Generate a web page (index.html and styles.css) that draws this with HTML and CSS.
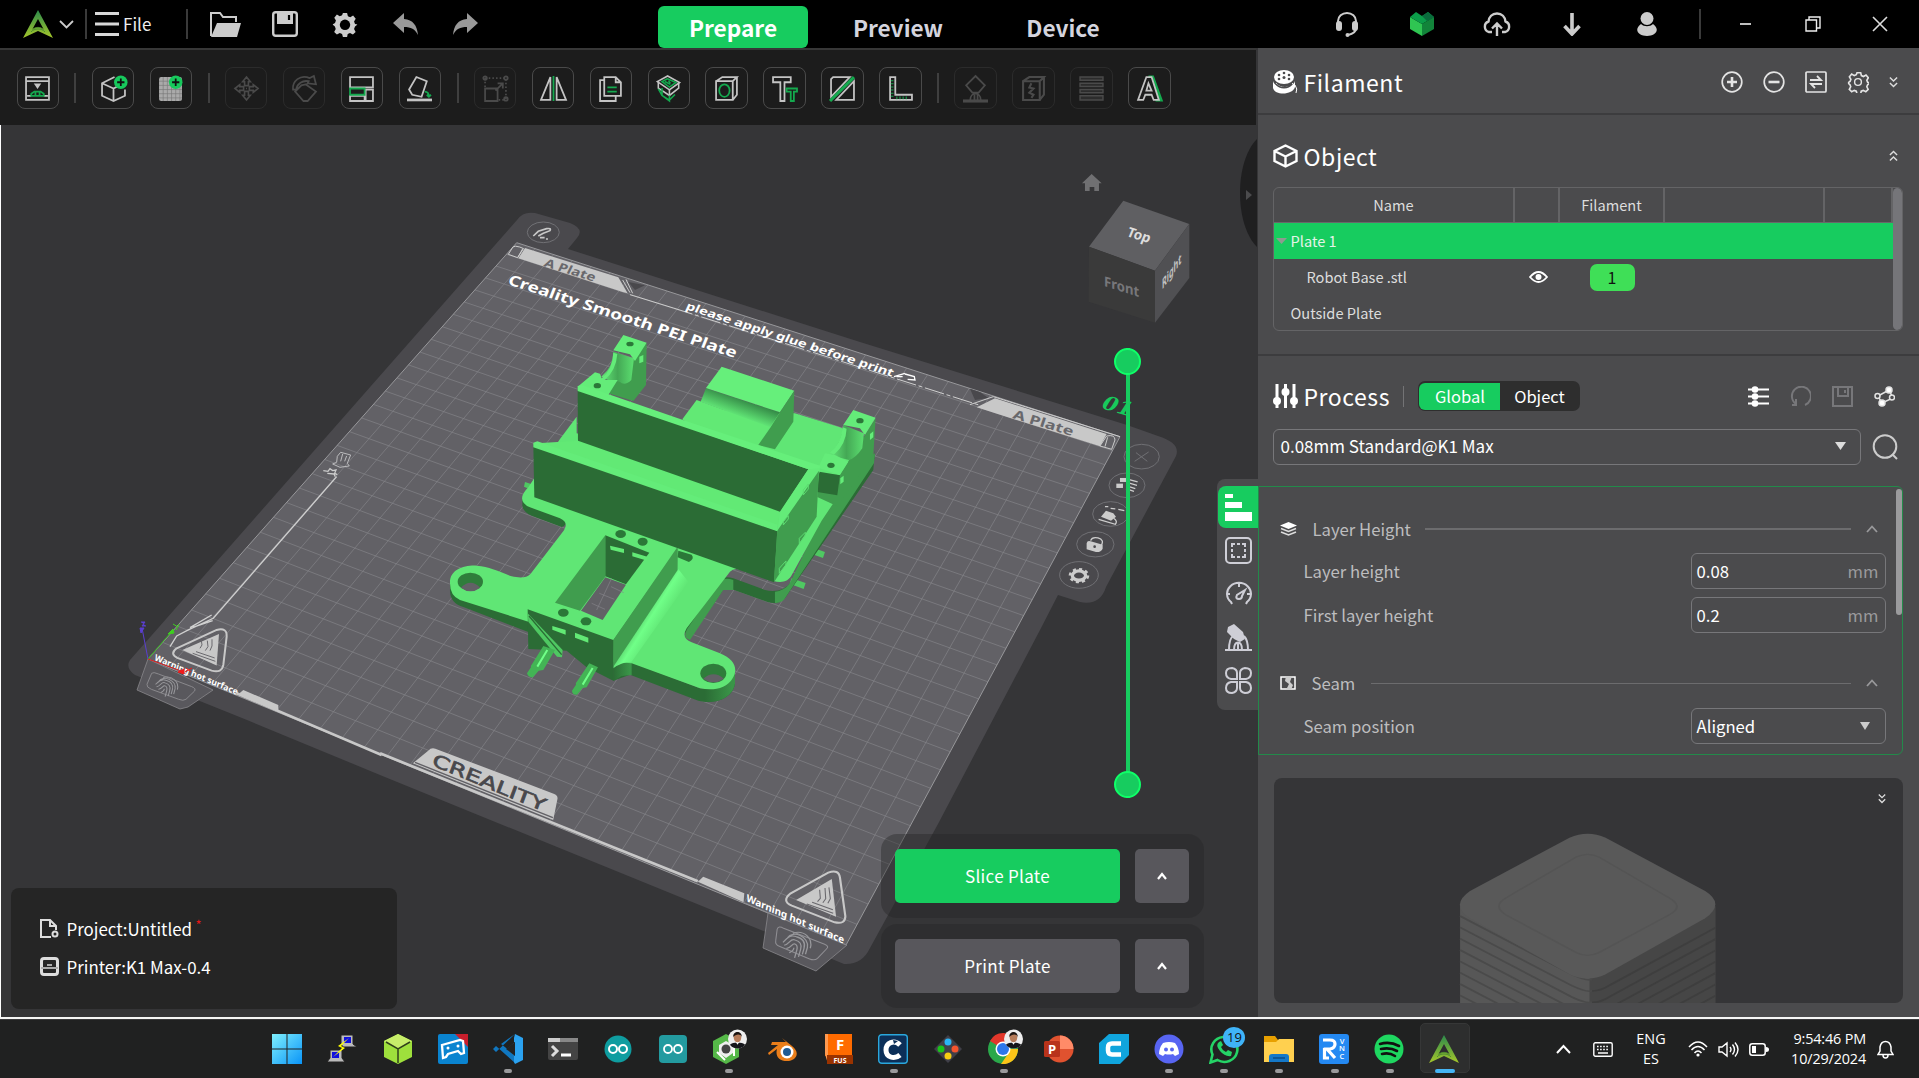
FILE: index.html
```html
<!DOCTYPE html>
<html lang="en">
<head>
<meta charset="utf-8">
<title>Creality Print</title>
<link rel="stylesheet" href="styles.css">
</head>
<body>
<svg class="defs" width="0" height="0">
  <defs>
    <linearGradient id="gLogo" x1="0" y1="0" x2="0" y2="1"><stop offset="0" stop-color="#2c8a4b"/><stop offset="1" stop-color="#a5c62b"/></linearGradient>
    <linearGradient id="gWin" x1="0" y1="0" x2="1" y2="1"><stop offset="0" stop-color="#7ff0fd"/><stop offset="1" stop-color="#0a94f7"/></linearGradient>
    <symbol id="logo" viewBox="0 0 30 28"><path d="M15 0 0 28l15-7 15 7ZM15 9l5.500 10c-3-2-8-2-11 0Z" fill="url(#gLogo)" fill-rule="evenodd"/><path d="M9.500 20c2-3.500 9-3.500 11 0M8 22c3-4 11-4 14 0" fill="none" stroke="#4f8f2e" stroke-width="1"/></symbol>
    <symbol id="gear" viewBox="0 0 24 24"><path d="M10 1h4l.8 3.100 2.200 1 2.800-1.700 2.500 3-1.600 2.800.9 2.300L24 12l-2.400 2-.9 2.300 1.500 2.900-2.600 2.500-2.800-1.500-2.200.9L14 24h-4l-.8-2.900-2.200-.9-2.800 1.500-2.600-2.500 1.500-2.900L2.300 14 0 12l2.400-1.500.9-2.300-1.600-2.800 2.500-3L7 4.100l2.200-1Z"/></symbol>
    <symbol id="dbl" viewBox="0 0 10 12"><path d="m1 1 4 4 4-4M1 7l4 4 4-4" fill="none" stroke="currentColor" stroke-width="1.600"/></symbol>
    <symbol id="caret" viewBox="0 0 12 8"><path d="m1 7 5-5.500L11 7" fill="none" stroke="currentColor" stroke-width="1.800"/></symbol>
    <symbol id="avatar" viewBox="0 0 20 20"><circle cx="10" cy="10" r="10" fill="#eee"/><path d="M2 16c3-3 13-3 16 0a10 10 0 0 1-16 0" fill="#15161b"/><path d="m8 13 2 3 2-3" fill="#fff"/><ellipse cx="10" cy="8.500" rx="4" ry="5" fill="#b67c5a"/><path d="M5.500 8C5 1 15 1 14.500 8 13 4 8 5 5.500 8" fill="#1c1512"/></symbol>
  </defs>
</svg>
<div class="app">
  <header class="topbar">
    <div class="top-left">
      <svg class="app-logo" width="30" height="28"><use href="#logo"/></svg>
      <svg class="app-chev" width="15" height="9" viewBox="0 0 15 9"><path d="m1 1 6.500 6.500L14 1" fill="none" stroke="#ccc" stroke-width="1.800"/></svg>
      <i class="vline"></i>
      <svg width="24" height="24" viewBox="0 0 24 24"><path d="M0 1.500h24M0 12h24M0 22.500h24" stroke="#d8d8d8" stroke-width="3"/></svg>
      <span class="file">File</span>
      <i class="vline thin"></i>
      <svg class="q1" width="31" height="25" viewBox="0 0 31 25"><path d="M1 24V1h9l3 4h13v5" fill="none" stroke="#ccc" stroke-width="2"/><path d="M7 11h24l-4 14H1Z" fill="#ccc"/></svg>
      <svg class="q2" width="26" height="26" viewBox="0 0 26 26"><rect x="1.200" y="1.200" width="23.600" height="23.600" rx="2.500" fill="none" stroke="#ccc" stroke-width="2.400"/><path d="M5 1h16v12H5Z" fill="#ccc"/><path d="M17 4v5" stroke="#000" stroke-width="2.200"/></svg>
      <svg class="q3" width="26" height="25" viewBox="0 0 24 24"><use href="#gear" fill="#ccc"/><circle cx="12" cy="12.300" r="5" fill="#000"/></svg>
      <svg class="q4" width="25" height="22" viewBox="0 0 25 22"><path d="M0 10 11 0v6c9 1 13 6 14 16-3-6-7-8-14-8v6Z" fill="#999"/></svg>
      <svg class="q5" width="25" height="22" viewBox="0 0 25 22"><path d="M25 10 14 0v6C5 7 1 12 0 22c3-6 7-8 14-8v6Z" fill="#999"/></svg>
    </div>
    <nav class="modes"><a class="mode on">Prepare</a><a class="mode">Preview</a><a class="mode">Device</a></nav>
    <div class="top-right">
      <svg width="24" height="25" viewBox="0 0 24 25"><path d="M3 12V9a9 8 0 0 1 18 0v7c0 4-3 6-8 7" fill="none" stroke="#ccc" stroke-width="2"/><rect x="1" y="9" width="6" height="10" rx="3" fill="#ccc"/><rect x="17" y="9" width="6" height="10" rx="3" fill="#ccc"/><circle cx="12.500" cy="23" r="2" fill="#ccc"/></svg>
      <svg class="r2" width="24" height="24" viewBox="0 0 24 24"><path d="m0 5 12 7v12L0 17Z" fill="#2fc552"/><path d="m24 5-12 7v12l12-7Z" fill="#12843a"/><path d="m0 5 6-5 6 4 6-4 6 5-12 7Z" fill="#0b9d49"/><path d="m12 4 6-4 6 5-7 4Z" fill="#0a6b3c"/></svg>
      <svg class="r3" width="28" height="25" viewBox="0 0 28 25"><path d="M9 20H6A5.500 5.500 0 0 1 5.500 9.500C6 5 9 1.500 14 1.500S22 5 22.500 9.500A5.500 5.500 0 0 1 22 20h-3M14 24V12M9 16.500l5-5 5 5" fill="none" stroke="#ccc" stroke-width="2.400"/></svg>
      <svg class="r4" width="18" height="24" viewBox="0 0 18 24"><path d="M9 1v20M1.500 14 9 22l7.500-8" fill="none" stroke="#ccc" stroke-width="3.600"/></svg>
      <svg class="r5" width="20" height="24" viewBox="0 0 20 24"><circle cx="10" cy="6.500" r="6.500" fill="#ccc"/><path d="M4 12c3 3 9 3 12 0 8 6 2 12-6 12S-4 18 4 12" fill="#ccc"/></svg>
      <i class="vline r6"></i>
      <svg class="r7" width="11" height="2"><path d="M0 1h11" stroke="#fff" stroke-width="1.500"/></svg>
      <svg class="r8" width="16" height="16" viewBox="0 0 16 16"><path d="M1 4h10.500v11H1ZM4 4V1h11v11h-3" fill="none" stroke="#eee" stroke-width="1.400"/></svg>
      <svg class="r9" width="16" height="16" viewBox="0 0 16 16"><path d="m1 1 14 14M15 1 1 15" stroke="#ddd" stroke-width="1.600"/></svg>
    </div>
  </header>
  <main class="main">
    <section class="work">
      <div class="toolbar">
        <b class="tool"><svg viewBox="0 0 24 24"><path d="M1 1h22v22H1ZM1 5h22M2 19h4M18 19h4"/><path d="m10 8 2 3 2-3Z" class="f"/><path d="M6 19v-2l3-2h6l3 2v2ZM10 15v4M14 15v4" class="g"/></svg></b>
        <i></i>
        <b class="tool"><svg viewBox="0 0 24 24"><path d="M13 1 1 7v12l11 5 11-5v-6M1 7l11 5M12 12v12M12 12l4-2"/><circle cx="19" cy="6" r="6.500" class="gf"/><path d="M19 2.500v7M15.500 6h7" stroke="#111"/></svg></b>
        <b class="tool"><svg viewBox="0 0 24 24"><rect x="1" y="1" width="22" height="23" rx="2" fill="#aaa" stroke="none"/><path d="M5 1v23M9 1v23M13 1v23M17 1v23M21 1v23M1 5h22M1 9h22M1 13h22M1 17h22M1 21h22" stroke="#777" stroke-width=".6"/><circle cx="17" cy="6" r="6.500" class="gf"/><path d="M17 2.500v7M13.500 6h7" stroke="#111"/></svg></b>
        <i></i>
        <b class="tool off"><svg viewBox="-1 -1 26 26"><path d="m12 0 4 5h-2v4h-4V5H8ZM12 24l4-5h-2v-4h-4v4H8ZM0 12l5-4v2h4v4H5v2ZM24 12l-5-4v2h-4v4h4v2ZM11.500 12h1"/></svg></b>
        <b class="tool off"><svg viewBox="0 0 24 24"><path d="m13 8 10 7-8 9h-4l-8-9 6-6ZM1 13C0 5 8-2 17 2l4-2 2 8-8-1 1-2C10 4 5 7 4 13Z"/></svg></b>
        <b class="tool"><svg viewBox="0 0 24 24"><path d="M1 1h22v10H1ZM1 19h14v5H1ZM16 13h7v11h-7Z"/><path d="M1 12h14v6H1Z" class="g"/></svg></b>
        <b class="tool"><svg viewBox="0 0 24 24"><path d="m9 1 10 4-5 15-9-2-3-5Z"/><path d="M0 23h24" stroke-width="2.600"/><path d="M17 15c3 0 4 2 4 5m-2-2 2 2 2-2" class="g"/></svg></b>
        <i></i>
        <b class="tool off"><svg viewBox="0 0 24 24"><path d="M2 12h12v12H2ZM12 14l7-7m-5 0h5v5"/><path d="M2 2h20v20M2 2v9M15 23h7" stroke-dasharray="1.500 2"/><circle cx="2" cy="2" r="1.700"/><circle cx="22" cy="2" r="1.700"/><circle cx="22" cy="22" r="1.700"/></svg></b>
        <b class="tool"><svg viewBox="0 0 24 24"><path d="M9 1v22H0ZM15 1v22h9Z"/><path d="M12 0v24" class="g"/></svg></b>
        <b class="tool"><svg viewBox="0 0 24 24"><path d="M6 1h11l5 5v13H6ZM17 1v5h5M6 4H2v20h15v-4"/><path d="M9 11h9M9 15h9" class="g"/></svg></b>
        <b class="tool"><svg viewBox="0 -1 24 27"><path d="M1 5v7l12 8 10-8V6" /><path d="m1 13 4 7 8 5 6-6M5 12v8l8 6V19" class="g"/><path d="M11-1 0 5l13 9 11-8Z" fill="#1d1d1d"/><path d="M11 2 5 5l8 6 7-5ZM8 5l6 3M12 4l2 3" class="g"/><path d="M13 14v6"/></svg></b>
        <b class="tool"><svg viewBox="0 0 24 24"><path d="M2 5h16v18H2ZM2 5l6-4h14l-4 4M22 1v17l-4 5"/><ellipse cx="10" cy="14" rx="5" ry="6" class="g"/></svg></b>
        <b class="tool"><svg viewBox="0 0 24 24"><path d="M1 1h17v5h-6v18H8V6H1Z"/><path d="M14 12h10v3h-3v9h-3v-9h-4Z" class="g"/></svg></b>
        <b class="tool"><svg viewBox="0 0 24 24"><path d="M3 1h16L1 20V3ZM23 5v18H6Z"/><path d="M0 24 23 1" class="g" stroke-width="3"/></svg></b>
        <b class="tool"><svg viewBox="0 0 24 24"><path d="M2 1h5v17h16v5H2Z"/><path d="M4 4v16M8 21h12" class="g" stroke-dasharray="1 2" stroke-width="2.500"/></svg></b>
        <i></i>
        <b class="tool off"><svg viewBox="0 0 24 24"><path d="m12 0 9 9-6 7H9L3 9ZM7 23c0-8 10-8 10 0M11 16v7M14 16v7"/><path d="M0 24h24" stroke-width="3"/></svg></b>
        <b class="tool off"><svg viewBox="0 0 24 24"><path d="M2 5h16v18H2ZM2 5l6-4h14l-4 4M22 1v17l-4 5M10 7l-2 4 4 1-4 4 4 2-2 3" stroke-width="2"/></svg></b>
        <b class="tool off"><svg viewBox="0 0 24 24"><path d="M1 1h22v3H1ZM1 7h22v3H1ZM1 13h22v3H1ZM1 19h22v4H1Z" fill="#2c2c2c" stroke-width="1.400"/></svg></b>
        <b class="tool"><svg viewBox="0 0 24 24"><path d="M11 1h4l8 22h-4l-2-6H9" class="g" stroke-width="3"/><path d="M9 1h5l7 22h-5l-2-5H8l-2 5H1ZM11 7l-2 7h5Z" fill="#1d1d1d"/></svg></b>
      </div>
      <div class="viewport">
        <svg class="scene" width="1257" height="892" viewBox="0 125 1257 892">
          <defs>
            <linearGradient id="gFil" gradientUnits="userSpaceOnUse" x1="640" y1="830" x2="720" y2="880"><stop offset="0" stop-color="#409d4e"/><stop offset=".55" stop-color="#70ff88"/><stop offset="1" stop-color="#60e474"/></linearGradient>
            <linearGradient id="gCur" gradientUnits="userSpaceOnUse" x1="940" y1="235" x2="920" y2="290"><stop offset="0" stop-color="#328544"/><stop offset="1" stop-color="#64ec79"/></linearGradient>
            <linearGradient id="gEnd" x1="0" x2="1"><stop offset="0" stop-color="#2b6c35"/><stop offset=".9" stop-color="#3a9548"/></linearGradient>
            <linearGradient id="gArc" x1="0" x2="1"><stop offset="0" stop-color="#64e879"/><stop offset=".5" stop-color="#44a855"/><stop offset="1" stop-color="#5cdf70"/></linearGradient>
            <g id="print" fill="none" stroke="#98989c"><path d="M0 -18c20-14 42 0 42 24M-8 -4C-2-26 34-20 36 6v16M-14 8c4-8 8-22 22-20 16 0 22 10 22 22v14M-10 14c10-6 8-20 18-18 12 0 16 8 16 18v18M-4 20C6 14 4 4 10 5s7 6 7 13v18M4 28c6-6 7-10 6-14" stroke-width="2.600"/></g>
          </defs>
          <path d="M517 220Q523 211 535 213L570 223Q585 229 577 238L568 249 860 342 1127 425 1158 436Q1181 443 1176 456L1106 587Q1100 606 1080 602L1058 595 1040 630 938 824 870 948Q862 965 844 964L766 932 380 775 247 720 135 675Q125 668 130 660Z" fill="#4a494d"/>
          <path d="M516.700 242.700 1120 436.700 846 945 148 659Z" fill="#626166"/>
          <g id="grid" fill="none" stroke="#858489" stroke-width=".9" opacity=".75"></g>
          <path d="M516.700 242.700 1120 436.700 846 945 148 659Z" fill="none" stroke="#97979a"/>
          <path d="m148 659-11 31 43 19 8-2 25-17ZM768 913l-5 35 53 23 31-26Z" fill="#59585d" stroke="#89888c" stroke-width=".8"/>
          <g transform="translate(120 200) scale(.3333)">
            <path d="M95 1420q5-5 20 2l100 38q15 6 8 14l-25 24q-8 6-22 0l-82-30q-15-6-13-15Z" fill="none" stroke="#8a898d" stroke-width="3"/>
            <use href="#print" transform="translate(125 1450) rotate(15) scale(1.200 1)"/>
            <path d="m650 830-370 425-75 35-35 18-20 32M275 1245l-65 38M278 1262l-60 20" fill="none" stroke="#d0d0d0" stroke-width="4"/>
            <path d="m662 757 30 8-10 25 6 8-28 4-22-10 12-5 2-18ZM668 762l-6 22M680 768l-6 16" fill="none" stroke="#bcbcbe" stroke-width="3"/><path d="m610 812 14 2 6-8 8 6 10-2-4 10 8 4M622 820l20 2 4 8" fill="none" stroke="#ccc" stroke-width="4"/>
            <path d="M170 1345 290 1290q32-8 30 20l-10 85q-4 25-35 17l-103-38q-24-12-2-29Z" fill="none" stroke="#c8c8c8" stroke-width="6"/>
            <path d="m187 1350 110-48-7 95Z" fill="#c8c8c8"/><path d="m240 1345 6-10-2-14M256 1352l8-12-2-18M270 1352l6-14v-20M218 1360l68 24M228 1355l56 19" stroke="#69686d" stroke-width="3" fill="none"/>
            <path d="m370 1470 105 45v20l-120-52Z" fill="#c8c8c8"/><path d="m350 1480 435 185" stroke="#c8c8c8" stroke-width="8"/>
            <ellipse cx="1270" cy="97" rx="48" ry="31" fill="none" stroke="#707074" stroke-width="3"/><path d="m1240 108 15-14 25-8q15-2 10 6l-20 8-15 8M1260 113h14M1278 117h6" stroke="#c8c8c8" stroke-width="5" fill="none"/>
            <path d="m1165 163 14-22q5-5 20 0l10 4-16 28ZM1193 173l18-28" fill="none" stroke="#ccc" stroke-width="3"/>
          </g>
          <g transform="translate(500 220) scale(.3333)">
            <path d="M75 84 355 172l28 48-15-4L55 115Z" fill="#c8c8c8"/><path d="m368 180 22 38M378 178l20 42M390 224l130 40" stroke="#ccc" stroke-width="3" fill="none"/>
            <path d="m385 186 50 10-30 14Z" fill="#49484c"/><path d="m520 264 920 292" stroke="#d0d0d0" stroke-width="3" stroke-dasharray="60 8 12 8"/>
            <path d="m1182 470 33-10M1190 470h18M1215 462l28 8 2 10-22-2" fill="none" stroke="#fff" stroke-width="4"/>
          </g>
          <g transform="translate(860 150) scale(.3333)">
            <path d="m330 716 30 10 25 18-40 6Z" fill="#49484c"/>
            <path d="m405 745 335 107-20 37L350 772Z" fill="#c8c8c8"/><path d="m330 764 70-24 380 120M720 888l20-30q25-5 25 12l-10 28ZM735 890l8-28" fill="none" stroke="#ccc" stroke-width="3"/>
            <g fill="none" stroke="#6f6f73" stroke-width="3"><ellipse cx="845" cy="920" rx="53" ry="37"/><ellipse cx="801" cy="1006" rx="54" ry="37"/><ellipse cx="752" cy="1092" rx="54" ry="37"/><ellipse cx="706" cy="1183" rx="56" ry="38"/><ellipse cx="657" cy="1275" rx="58" ry="40"/><path d="m828 908 34 26M866 906l-42 28"/></g>
            <g fill="#ccc"><rect x="780" y="984" width="18" height="12"/><rect x="769" y="1001" width="20" height="13"/><path d="m738 1082 22 8 8 10-15 12-30-12Z"/><path d="m680 1180q2-10 12-6l36 10v12q-6 12-20 10l-28-8Z"/></g>
            <circle cx="704" cy="1190" r="4" fill="#4a494d"/>
            <path d="m805 988 28 8M803 998l28 8M800 1008l26 8M798 1016l24 8M716 1108l50 15q8-10-5-18M735 1070h10M752 1075l14 2M775 1078l18 4M692 1172q4-12 22-8 20 6 10 22" fill="none" stroke="#ccc" stroke-width="4"/>
            <ellipse cx="657" cy="1277" rx="20" ry="14" fill="none" stroke="#ccc" stroke-width="10"/><ellipse cx="657" cy="1277" rx="27" ry="19" fill="none" stroke="#ccc" stroke-width="8" stroke-dasharray="9 9"/>
            <path d="m695 72 30 28h-8v23h-14v-12h-14v12h-14v-23h-9Z" fill="#707072"/>
            <path d="m790 152 198 70-103 140-198-72Z" fill="#5f5f62"/><path d="m687 290 198 72v156l-199-63Z" fill="#3a3a3a"/><path d="m885 362 103-140v162L885 518Z" fill="#505053"/>
          </g>
          <g transform="translate(380 680) scale(.35714 .33333)">
            <path d="m0 220 890 384" stroke="#c8c8c8" stroke-width="8"/><path d="m890 605 15-15 115 50-2 27Z" fill="#c8c8c8"/>
            <path d="m1020 668 285 127" stroke="#8f8f93" stroke-width="2"/>
            <path d="M92 250 135 212q8-10 20-6L488 342q10 4 9 14l-12 64Z" fill="#c8c8c8"/><path d="m98 247 386 166" stroke="#626166" stroke-width="4"/>
            <path d="m1150 640 105-62q30-12 33 16l15 115q0 25-30 18l-120-50q-30-14-3-37Z" fill="none" stroke="#c8c8c8" stroke-width="6"/>
            <path d="m1165 660 100-63 12 113Z" fill="#c8c8c8"/><path d="m1225 665 8-10-2-26M1240 668l8-12-2-32M1254 670l7-14-4-34M1195 672l74 28M1210 667l58 22" stroke="#69686d" stroke-width="3" fill="none"/>
            <path d="M1112 748q4-12 18-3l115 48q14 6 5 14l-25 28q-8 8-22 2l-85-38q-12-5-10-17Z" fill="none" stroke="#8f8e93" stroke-width="3"/>
            <use href="#print" transform="translate(1150 782) rotate(15) scale(1.400 1.300)"/>
          </g>
          <g class="plate-text">
            <text transform="matrix(.953 .31 -.3 .75 507 284)" font-size="18" textLength="239" lengthAdjust="spacingAndGlyphs" fill="#fff">Creality Smooth PEI Plate</text>
            <text transform="matrix(.953 .312 -.35 .75 685 309)" font-size="13.500" textLength="217" lengthAdjust="spacingAndGlyphs" fill="#fff">please apply glue before print</text>
            <text transform="matrix(.953 .295 -.35 .72 543 266)" font-size="15" textLength="53" lengthAdjust="spacingAndGlyphs" fill="#69686c">A Plate</text>
            <text transform="matrix(.953 .285 -.25 .75 1012 418)" font-size="16" textLength="63" lengthAdjust="spacingAndGlyphs" fill="#69686c">A Plate</text>
            <text transform="matrix(.91 .385 -.25 .8 154 660)" font-size="10.500" textLength="91" lengthAdjust="spacingAndGlyphs" fill="#fff">Warning hot surface</text>
            <text transform="matrix(.91 .4 -.15 .85 746 901)" font-size="11.500" textLength="107" lengthAdjust="spacingAndGlyphs" fill="#fff">Warning hot surface</text>
            <text transform="matrix(.92 .38 -.32 .85 431 765)" font-size="19" textLength="122" lengthAdjust="spacingAndGlyphs" fill="#49484c" class="brand">CREALITY</text>
            <text transform="matrix(.95 .3 -.35 .85 1126 236)" font-size="15" textLength="24" lengthAdjust="spacingAndGlyphs" fill="#ddd">Top</text>
            <text transform="matrix(.95 .3 0 1 1104 286)" font-size="14" textLength="37" lengthAdjust="spacingAndGlyphs" fill="#77777a">Front</text>
            <text transform="matrix(.57 -.82 0 1 1162 290)" font-size="14" textLength="34" lengthAdjust="spacingAndGlyphs" fill="#c0c0c0">Right</text>
            <text transform="matrix(.96 .28 -.35 .9 1101 408)" font-size="20" textLength="30" lengthAdjust="spacingAndGlyphs" fill="#17c95c" class="num">01</text>
          </g>
          <path d="m148 659-6-31" stroke="#5a3fd0"/><path d="m148 659 24-28" stroke="#35b81c"/><path d="m148 659 36 13" stroke="#e01a1a"/>
          <path d="m141 633-1-5 4 0ZM141 622h4l-3 4h4" stroke="#5a3fd0" fill="#5a3fd0"/><path d="m168 634 5-5 1 4ZM173 624l5 3m1-3-3 6" stroke="#3ecf1f" fill="#3ecf1f"/><path d="m178 672 6-3v5ZM186 668l5 4m1-4-7 4" stroke="#f01a1a" fill="#f01a1a"/>
          <g transform="translate(430 320) scale(.3333)" stroke-linejoin="round">
            <!-- underside and pins -->
            <g fill="#4fc862"><path d="m1145 682 40 14-6 18-40-14ZM1085 775l42 14-6 18-42-16ZM285 486l25 8v18l-28-12Z"/></g>
            <path d="M60 790v25c2 25 15 38 40 46l195 75v-60ZM277 535v22q3 20 28 30l90 34q15-2 13-28l-60-50Z" fill="#2b6c35"/>
            <path d="M600 1025 810 1105q70 15 105-45v30c-5 45-60 65-110 52L600 1064l-50 18v-62Z" fill="#2b6c35"/><path d="m825 1105 90-50v35c-5 40-50 60-90 55Z" fill="url(#gEnd)"/><path d="m550 1025 55 0v40l-30 3-25 15Z" fill="url(#gEnd)"/>
            <path d="M865 785q15-20 45-10l95 35q50 12 80-25l250-370v-25l-5 60-265 385q-20 20-50 12l-105-38-30 0-100 145-10-10q-12-12 0-34Z" fill="#2b6c35"/>
            <path d="m1230 470 105-70-3 30-267 405q-5 12-30 15l0-35q25 0 45-25ZM865 790q12-20 45-10v30l-30 0-100 150-12-6q-6-10 4-28Z" fill="#409d4e"/>
            <!-- base top face -->
            <path d="M60 790C58 750 100 735 140 737c40 3 60 15 105 32 25 6 45 5 57-8l100-130q15-24-12-36l-90-33q-45-20-5-60l95-145 50-67 0 50 400 100 0-170 255 10 135 42 100 50-155 230-88 160c-12 25-35 28-58 20l-95-32q-22-8-34 5L770 925q-18 30 15 42l85 33c45 18 55 48 38 75-18 32-60 38-98 30L605 1030l-55-5-255-120L90 840Q60 828 60 790Z" fill="#60e675"/>
            <!-- front bracket -->
            <path d="M743 685v60l32 40-170 240q-30 0-55 20v-85Z" fill="url(#gFil)"/><path d="m550 960 193-280v70l-193 290Z" fill="#409d4e"/>
            <path d="m293 868 257 92v122l-80-40-60-50-115-5Z" fill="#2b6c35"/>
            <path d="M526 646v124L450 872l-75-24Z" fill="#409d4e"/><path d="m526 646 132 52-70 95-62-24Z" fill="#2b6c35"/><path d="m526 772 62 22-70 106-65-28Z" fill="#626166"/><path d="m543 800 38 18M508 820l45 18M485 850l40 18M545 775l-45 95" stroke="#858489" stroke-width="2"/>
            <path d="m540 677 42 10v12l-40-10ZM607 697l45 13v12l-45-13ZM367 918l40 12v14l-40-15ZM435 938l40 15v15l-40-15Z" fill="#62e975"/>
            <path d="m293 880 105 110-2 22-15-2-86-105Z" fill="#4fc862"/><path d="m297 888 98 116" stroke="#2b6c35" stroke-width="4"/>
            <path d="m340 978 35 12-35 60-14 2-17 20q-14 2-18-12l12-18q-2-6 2-8ZM478 1030l26 12-34 60-12 2-17 20q-14 2-15-12l12-18q-2-6 2-8Z" fill="#43b455"/><path d="m352 990-30 50M488 1044l-30 50" stroke="#70ff88" stroke-width="6"/>
            <ellipse cx="121" cy="785" rx="38" ry="27" fill="#2f7d3b"/><path d="M93 803q28-30 58 0-30 22-58 0" fill="#626166"/>
            <ellipse cx="850" cy="1060" rx="39" ry="29" fill="#2f7d3b"/><path d="M820 1076q30-26 62 0-32 22-62 0" fill="#626166"/>
            <g fill="#2b7838"><ellipse cx="572" cy="642" rx="16" ry="12"/><ellipse cx="638" cy="665" rx="15" ry="12"/><ellipse cx="400" cy="878" rx="16" ry="12"/><ellipse cx="468" cy="904" rx="16" ry="12"/><path d="m745 692 40 12q10 12-8 22l-34-14Z"/></g>
            <!-- rear block -->
            <path d="m800 240 220 80-35 55-50 60-178-137Z" fill="#62e975"/><path d="m828 205 222 72-30 45-208-77Z" fill="url(#gCur)"/><path d="m875 140 218 72-43 65-222-73Z" fill="#66ef7b"/><path d="m1093 212-3 93-55 83-50-13 37-53 28-45Z" fill="#409d4e"/>
            <!-- left mount -->
            <path d="m650 68-2 127-38 48-75-23 20-30Z" fill="#409d4e"/><path d="m550 95 62 20-8 65q-20 20-35 5l-35-5-20-10q36-30 36-75Z" fill="url(#gArc)"/><path d="m550 98q-2 50-36 78l10 4q34-28 38-78Z" fill="#64ec79"/><path d="m580 45 70 23-35 55-15-20-50-12Z" fill="#64ec79"/><path d="m495 157 15 4 5 14 15 5 33 0-30 48-90-28Z" fill="#64ec79"/><path d="m628 110 12-5v20l-12 5Z" fill="#64ec79"/><ellipse cx="600" cy="72" rx="11" ry="7" fill="#2b7838"/><ellipse cx="502" cy="197" rx="11" ry="8" fill="#2b7838"/>
            <!-- right mount -->
            <path d="m1337 295-7 112-108 152-60-28 5-70 62 4Z" fill="#409d4e"/><path d="m1168 455 62 11-8 60-60-10Z" fill="#2b6c35"/><path d="m1240 315 62 25-5 45q-20 30-40 35l-60-15q42-40 43-90Z" fill="url(#gArc)"/><path d="m1238 322q-4 50-38 76l12 6q36-30 38-78Z" fill="#64ec79"/><path d="m1270 270 67 23-32 52-15-20-50-10Z" fill="#64ec79"/><path d="m1185 400 30 5 40 20-25 40-65-22Z" fill="#64ec79"/><path d="m1320 342 10-8v18l-10 8ZM1231 475l10-8v18l-10 8Z" fill="#64ec79"/><ellipse cx="1290" cy="302" rx="11" ry="8" fill="#2b7838"/><ellipse cx="1203" cy="436" rx="11" ry="8" fill="#2b7838"/>
            <!-- tray walls -->
            <path d="m445 362 605 213-10 55-720-260Z" fill="#62e975"/>
            <path d="m443 208 692 240-85 127-606-213Z" fill="#2b6c35"/><path d="m443 198 15-2 312 108 400 133-2 18-33-7L443 213Z" fill="#66ef7b"/>
            <path d="m1135 448 33-3v12l-126 178 8-58Z" fill="#64ec79"/><path d="m1167 452-7 138-128 197 10-155Z" fill="#409d4e"/>
            <path d="m1120 510 15-18v15l-15 18ZM1060 605l15-18v10l-15 18ZM1108 655l18-18v10l-18 24ZM1048 745l20-22v12l-20 25Z" fill="none" stroke="#5cdc70" stroke-width="3"/>
            <path d="m310 376 732 256-10 155-719-255Z" fill="#2b6c35"/><path d="m310 368 12-4 720 250v20L310 382Z" fill="#64ec79"/>
          </g>
          <path d="M1258 138c-24 22-24 88 0 110Z" fill="#1f1f20"/><path d="m1246 190 6 5-6 5Z" fill="#4b4b4d"/>
        </svg>
        <div class="slider"><span></span><span></span></div>
        <div class="info">
          <p><svg width="19" height="19" viewBox="0 0 19 19"><path d="M11 18H1V1h9l6 6v4M10 1v6h6" fill="none" stroke="#ddd" stroke-width="2"/><circle cx="15" cy="15" r="2.500" fill="none" stroke="#ddd" stroke-width="2"/></svg>Project:Untitled<em>*</em></p>
          <p><svg width="19" height="19" viewBox="0 0 19 19"><rect x="1.500" y="1.500" width="16" height="16" rx="2.500" fill="none" stroke="#ddd" stroke-width="3"/><path d="M1 11h17M7 8h5" stroke="#aaa" stroke-width="2"/></svg>Printer:K1 Max-0.4</p>
        </div>
        <div class="actions">
          <div class="act"><button class="go">Slice Plate</button><button class="more"><svg width="10" height="8" viewBox="0 0 10 8"><path d="m1 7 4-5 4 5" fill="none" stroke="#fff" stroke-width="2.200"/></svg></button></div>
          <div class="act"><button>Print Plate</button><button class="more"><svg width="10" height="8" viewBox="0 0 10 8"><path d="m1 7 4-5 4 5" fill="none" stroke="#fff" stroke-width="2.200"/></svg></button></div>
        </div>
        <div class="sidetabs">
          <b class="on"><svg width="27" height="27" viewBox="0 0 27 27"><path d="M0 0h8v4H0ZM0 8h17v6H0ZM0 18h27v9H0Z" fill="#fff"/></svg></b>
          <b><svg width="27" height="27" viewBox="0 0 27 27"><rect x="1" y="1" width="25" height="25" rx="4"/><path d="M7 10V7h3M17 7h3v3M20 17v3h-3M10 20H7v-3M12 7h3M12 20h3M7 12v3M20 12v3"/></svg></b>
          <b><svg width="27" height="27" viewBox="0 0 27 27"><path d="M7 24 6 22A12 11 0 1 1 22 22l-1 2M14 2v5M2 14h3M22 14h3"/><path d="m20 10-8 5q-2 4 2 4 3 0 3-3Z"/></svg></b>
          <b><svg width="27" height="27" viewBox="0 0 27 27"><path d="m9 0 9 8 2 7-5 3-6-3L2 8 3 3Z" fill="#ceced6" stroke="none"/><path d="M0 26h27M4 26c0-8 1-12 4-14M9 26c0-10 8-10 8 0M13 26v-8M19 12c3 3 4 8 4 14"/></svg></b>
          <b><svg width="27" height="27" viewBox="0 0 27 27"><path d="M12 12H6q-5-1-5-6t6-5q5 1 5 5ZM15 12h6q5-1 5-6t-6-5q-5 1-5 5ZM12 15H6q-5 1-5 6t6 5q5-1 5-5ZM15 15h6q5 1 5 6t-6 5q-5-1-5-5Z"/></svg></b>
        </div>
      </div>
    </section>
    <aside class="panel">
      <section class="head filament">
        <svg width="25" height="24" viewBox="0 0 25 24"><ellipse cx="11" cy="7" rx="10" ry="7" fill="#fff"/><path d="M0 11c2 8 20 8 22 0v6c-2 8-20 9-22 1Z" fill="#fff"/><path d="M3 13c4 6 14 6 17 0M22 15q3 4 1 8" fill="none" stroke="#fff"/><path d="M3 14c4 5 12 5 16 0" stroke="#4b4b4d" fill="none" stroke-width="1.500"/><g fill="#4b4b4d"><circle cx="11" cy="3" r="1.300"/><circle cx="6" cy="5" r="1.300"/><circle cx="16" cy="5" r="1.300"/><circle cx="11" cy="7.500" r="1.500"/><circle cx="6" cy="9" r="1.300"/><circle cx="16" cy="9" r="1.300"/></g></svg>
        <h2>Filament</h2>
        <div class="acts">
          <svg width="22" height="22" viewBox="0 0 22 22"><circle cx="11" cy="11" r="9.800"/><path d="M11 6v10M6 11h10" stroke-width="2.600"/></svg>
          <svg width="22" height="22" viewBox="0 0 22 22"><circle cx="11" cy="11" r="9.800"/><path d="M5.500 11h11" stroke-width="2.600"/></svg>
          <svg width="22" height="22" viewBox="0 0 22 22"><rect x="1" y="1" width="20" height="20" rx="1"/><path d="M5 9h11l-4-4M17 13H6l4 4" stroke-width="1.800"/></svg>
          <svg width="22" height="22" viewBox="-1 -1 26 26"><use href="#gear" stroke-width="1.800"/><circle cx="12" cy="12" r="4"/></svg>
          <svg class="dbl" width="9" height="12"><use href="#dbl"/></svg>
        </div>
      </section>
      <section class="objects">
        <div class="head">
          <svg width="25" height="24" viewBox="0 0 25 24"><path d="M12.500 1.500 1.500 7v10l11 5.500L23.500 17V7ZM1.500 7l11 5.500L23.500 7M12.500 12.500v10" fill="none" stroke="#fff" stroke-width="2.400"/></svg>
          <h2>Object</h2>
          <div class="acts"><svg class="dbl up" width="9" height="12"><use href="#dbl"/></svg></div>
        </div>
        <div class="tree">
          <div class="rows">
            <div class="cols"><span>Name</span><span></span><span>Filament</span><span></span><span></span></div>
            <div class="row sel"><svg width="11" height="6"><path d="M0 0h11L5.500 6Z" fill="#8f9a90"/></svg>Plate 1</div>
            <div class="row child"><span>Robot Base .stl</span><svg width="19" height="12" viewBox="0 0 19 12"><path d="M1 6Q9.500-4 18 6 9.500 16 1 6Z" fill="none" stroke="#fff" stroke-width="1.800"/><circle cx="9.500" cy="6" r="3" fill="#fff"/></svg><b>1</b></div>
            <div class="row out">Outside Plate</div>
          </div>
          <div class="tbar"></div>
        </div>
      </section>
      <section class="process">
        <div class="head">
          <svg width="25" height="24" viewBox="0 0 25 24"><path d="M4 0v24M12.500 0v24M21 0v24" stroke="#fff" stroke-width="3"/><circle cx="4" cy="17" r="4" fill="#fff"/><circle cx="12.500" cy="8" r="4" fill="#fff"/><circle cx="21" cy="17" r="4" fill="#fff"/></svg>
          <h2>Process</h2><i></i>
          <div class="toggle"><span class="on">Global</span><span>Object</span></div>
          <div class="acts">
            <svg width="21" height="21" viewBox="0 0 21 21"><path d="M0 3.500h21M0 10.500h21M0 17.500h21" stroke="#fff" stroke-width="2"/><g fill="#fff" stroke="none"><circle cx="7" cy="3.500" r="3.300"/><circle cx="7" cy="10.500" r="3.300"/><circle cx="7" cy="17.500" r="3.300"/></g></svg>
            <svg class="dim" width="21" height="21" viewBox="0 0 21 21"><path d="M15 19a9.500 9.500 0 1 0-9-1M6 13v6H2" stroke-width="2"/></svg>
            <svg class="dim" width="21" height="21" viewBox="0 0 21 21"><path d="M1 1h19v19H1ZM6 1v9h10V1M13 4v3" stroke-width="2"/></svg>
            <svg width="21" height="21" viewBox="0 0 21 21"><path d="m4 10 11-6 4 8-11 5Z"/><g fill="#fff"><circle cx="15" cy="4" r="3"/><circle cx="8" cy="17" r="3"/></g><g fill="#4b4b4d"><circle cx="3.500" cy="10" r="2.500"/><circle cx="18" cy="11.500" r="2.500"/></g></svg>
          </div>
        </div>
        <div class="preset"><div class="select">0.08mm Standard@K1 Max<svg width="11" height="8"><path d="M0 0h11L5.500 8Z" fill="#ddd"/></svg></div><svg width="26" height="26" viewBox="0 0 26 26"><circle cx="13" cy="12.500" r="11.300" fill="none" stroke="#ccc" stroke-width="2"/><path d="m20 20 5 5" stroke="#ccc" stroke-width="2"/></svg></div>
        <div class="settings">
          <div class="group"><svg width="17" height="14" viewBox="0 0 17 14"><path d="m8.500 0 8.500 3.500-8.500 3.500L0 3.500Z" fill="#fff"/><path d="m1 6.500 7.500 3 7.500-3M1 10l7.500 3 7.500-3" fill="none" stroke="#ddd" stroke-width="1.600"/></svg><span>Layer Height</span><hr><svg class="gc" width="12" height="8"><use href="#caret"/></svg></div>
          <div class="field first"><label>Layer height</label><div class="box"><span>0.08</span><em>mm</em></div></div>
          <div class="field"><label>First layer height</label><div class="box"><span>0.2</span><em>mm</em></div></div>
          <div class="group seam"><svg width="16" height="14" viewBox="0 0 16 14"><path d="M1 1h14v12H1Z" fill="none" stroke="#fff" stroke-width="1.500"/><path d="M6 0 5 5l4 3-3 6h5l2-5-3-3 2-6Z" fill="#ccc"/></svg><span>Seam</span><hr><svg class="gc" width="12" height="8"><use href="#caret"/></svg></div>
          <div class="field last"><label>Seam position</label><div class="box"><span>Aligned</span><svg width="10" height="8"><path d="M0 0h10L5 8Z" fill="#ccc"/></svg></div></div>
          <div class="sbar"></div>
        </div>
      </section>
      <div class="stack">
        <svg width="629" height="225" viewBox="1274 777 629 225"><g transform="translate(1210 760) scale(.4522 .3333)"><path d="M553 435 840 640l0 90H553Z" fill="#575757"/><path d="m840 640 278-205v295H840Z" fill="#464646"/><g fill="none" stroke="#4a4a4a" stroke-width="5"><path id="ly" d="M553 465 800 640q35 22 45 15"/><use href="#ly" y="34"/><use href="#ly" y="68"/><use href="#ly" y="102"/><use href="#ly" y="136"/><use href="#ly" y="170"/><use href="#ly" y="204"/><use href="#ly" y="238"/></g><g fill="none" stroke="#3e3e3e" stroke-width="5"><path id="lr" d="M845 690q20 0 40-18l233-172"/><use href="#lr" y="34"/><use href="#lr" y="68"/><use href="#lr" y="102"/><use href="#lr" y="136"/><use href="#lr" y="170"/><use href="#lr" y="204"/></g><path d="M795 230q40-24 80 0l220 160q45 38 0 82L875 640q-40 26-80 0L575 472q-45-40 0-82Z" fill="#595959"/><path d="M810 288q25-16 50 0l155 122q35 27 0 52L860 575q-25 16-50 0L655 462q-32-27 0-52Z" fill="none" stroke="#545454" stroke-width="4"/></g></svg>
        <svg class="dbl" width="8" height="11"><use href="#dbl"/></svg>
      </div>
    </aside>
  </main>
  <footer class="taskbar">
    <div class="apps">
      <b><svg viewBox="0 0 30 30"><path d="M0 0h14.500v14.500H0ZM15.500 0H30v14.500H15.500ZM0 15.500h14.500V30H0ZM15.500 15.500H30V30H15.500Z" fill="url(#gWin)"/></svg></b>
      <b><svg viewBox="0 0 30 30"><path d="M14 1h12v9l4 3H16l-2-3ZM3 16h12v8l3 4H0l3-4Z" fill="#bbb" stroke="#222"/><path d="M17 3h7v6h-7ZM5 18h7v6H5Z" fill="#1010e0"/><path d="m22 4-11 8 4 2-9 9 12-9-4-2Z" fill="#ff0"/></svg></b>
      <b><svg viewBox="0 0 30 30"><path d="m15 0 14 7v16l-14 7L1 23V7Z" fill="#9ee03c"/><path d="m15 0 14 7-14 8L1 7Z" fill="#c7ee6a"/><path d="m3 8 12 7 12-7M15 15v14" stroke="#30401b" stroke-width="1.500" fill="none"/></svg></b>
      <b><svg viewBox="0 0 30 30"><rect width="30" height="30" rx="2" fill="#0a84d0"/><path d="m17 0h13v13Z" fill="#c81e2c"/><path d="m4 11 18-5 3 1 1 12-3 1-3-3-10 3-2 3-3 1Z" fill="none" stroke="#fff" stroke-width="2.300"/><circle cx="10" cy="14" r="1.500" fill="#fff"/><circle cx="20" cy="12" r="1.500" fill="#fff"/></svg></b>
      <b class="run"><svg viewBox="0 0 30 30"><path d="M22 0 3 18 0 15l3-3 19 17V21L8 10Z" fill="#1077c0"/><path d="m22 0 8 4v22l-8 4-1-2V4ZM22 8l-8 7 8 7Z" fill="#2ba2f0"/><path d="M22 8v14l-9-7Z" fill="#222"/></svg></b>
      <b><svg viewBox="0 0 30 30"><rect y="4" width="30" height="22" rx="2" fill="#444"/><path d="M0 4h12v4H0Z" fill="#ccc"/><path d="M12 4h18v4H12Z" fill="#888"/><path d="m4 12 5 5-5 5" fill="none" stroke="#ddd" stroke-width="3"/><path d="M13 21h10" stroke="#fff" stroke-width="3"/></svg></b>
      <b><svg viewBox="0 0 30 30"><circle cx="15" cy="15" r="13.500" fill="#0f9da0"/><g fill="none" stroke="#fff" stroke-width="2"><circle cx="10" cy="15" r="4"/><circle cx="20" cy="15" r="4"/></g></svg></b>
      <b><svg viewBox="0 0 30 30"><rect x="1" y="1" width="28" height="28" rx="4" fill="#239ba0"/><g fill="none" stroke="#fff" stroke-width="1.800"><circle cx="10" cy="15" r="4"/><circle cx="20" cy="15" r="4"/></g></svg></b>
      <b class="run"><svg viewBox="0 0 36 36"><path d="m14 6 13 7v16l-13 7L1 29V13Z" fill="#55b848"/><path d="m14 13 7 4v8l-7 5-7-5v-8Z" fill="#eee"/><circle cx="14" cy="21" r="4.500" fill="#444"/><path d="m5 24 8 8M22 16v12" stroke="#fff" stroke-width="2"/><use href="#avatar" x="16" y="0" width="19" height="22"/></svg></b>
      <b><svg viewBox="0 0 30 30"><path d="m14 4 10 8c9 7 4 15-5 15-8 0-12-5-10-12L1 21l-1-2 10-8H3l1-3h14Z" fill="#ea7e1a"/><circle cx="19" cy="18" r="6.500" fill="#fff"/><circle cx="19" cy="18" r="4" fill="#1f5b94"/></svg></b>
      <b><svg viewBox="0 0 30 30"><rect x="2" width="27" height="22" fill="#ff6b00"/><path d="M2 0v20l3 10V0Z" fill="#ff9a50"/><rect x="4" y="21" width="26" height="9" fill="#9a3300"/><text x="17" y="16" font-size="15" font-weight="700" text-anchor="middle" fill="#fff">F</text><text x="17" y="28.500" font-size="7" font-weight="700" text-anchor="middle" fill="#fff">FUS</text></svg></b>
      <b class="run"><svg viewBox="0 0 30 30"><rect x=".7" y=".7" width="28.600" height="28.600" rx="3" fill="#0c2f58" stroke="#2aa7dc" stroke-width="1.400"/><path d="M22 11c-6-6-14-2-14 5s8 10 14 5" fill="none" stroke="#fff" stroke-width="5"/><path d="m15 6 5 1-4 3Z" fill="#0c2f58"/></svg></b>
      <b><svg viewBox="0 0 30 30"><path d="m15 1 14 14-14 14L1 15Z" fill="#3f3f48"/><circle cx="15" cy="8" r="3.500" fill="#29b5f6"/><circle cx="8" cy="15" r="3.500" fill="#19c319"/><circle cx="22" cy="15" r="3.500" fill="#f4542e"/><circle cx="15" cy="22" r="3.500" fill="#f6cd12"/></svg></b>
      <b class="run"><svg viewBox="0 0 36 36"><circle cx="15" cy="21" r="15" fill="#2aa84a"/><path d="M15 21 2 13A15 15 0 0 1 29 14Z" fill="#e2372b"/><path d="M15 21h15a15 15 0 0 1-17 15l9-13Z" fill="#fbc418"/><circle cx="15" cy="21" r="7.500" fill="#fff"/><circle cx="15" cy="21" r="6" fill="#2d77ea"/><use href="#avatar" x="16" y="0" width="19" height="22"/></svg></b>
      <b><svg viewBox="0 0 30 30"><circle cx="16" cy="15" r="13.500" fill="#e0522f"/><path d="M16 1.500A13.500 13.500 0 0 1 29.500 15H16Z" fill="#ff8b68"/><rect y="7" width="16" height="16" rx="1.500" fill="#b8331b"/><text x="8" y="20" font-size="13" font-weight="700" text-anchor="middle" fill="#fff">P</text></svg></b>
      <b><svg viewBox="0 0 30 30"><path d="M10 0h20v21l-9 9H0V9Z" fill="#10a5dd"/><path d="M22 9.500h-9q-4 0-4 4v3q0 4 4 4h9" fill="none" stroke="#fff" stroke-width="4.500"/></svg></b>
      <b class="run"><svg viewBox="0 0 30 30"><circle cx="15" cy="15" r="14.500" fill="#5865f2"/><path d="M9 9q6-2 12 0 4 5 4 11l-4 2-2-2q-4 1-8 0l-2 2-4-2q0-6 4-11Z" fill="#fff"/><circle cx="12" cy="15.500" r="2" fill="#5865f2"/><circle cx="18" cy="15.500" r="2" fill="#5865f2"/></svg></b>
      <b class="run wa"><svg viewBox="0 0 30 30"><path d="m1.500 28.500 2-8a13 12.500 0 1 1 5 5.500Z" fill="#222" stroke="#25d366" stroke-width="2.600"/><path d="M10 8q-4 3 1 9t11 5l1-4-4-2-2 2q-4-2-5-5l2-2-2-4Z" fill="#25d366"/></svg><em>19</em></b>
      <b class="run"><svg viewBox="0 0 30 30"><path d="M0 2h11l3 4h16v22H0Z" fill="#e8a000"/><path d="M0 8h12l3-3h15v23H0Z" fill="#ffd04f"/><path d="M5 28v-5q0-3 3-3h14q3 0 3 3v5Z" fill="#1478c8"/><path d="M9 24h12" stroke="#08467c" stroke-width="1.300"/></svg></b>
      <b class="run"><svg viewBox="0 0 30 30"><rect width="30" height="30" rx="3" fill="#2489f2"/><path d="M4 6h7q5 0 5 4t-5 5H8l8 9M5.500 14v10H10" fill="none" stroke="#fff" stroke-width="3.200"/><g font-size="7.500" font-weight="600" text-anchor="middle" fill="#fff"><text x="23" y="9.500">V</text><text x="23" y="17">N</text><text x="23" y="24.500">C</text></g></svg></b>
      <b class="run"><svg viewBox="0 0 30 30"><circle cx="15" cy="15" r="14.500" fill="#1ed760"/><path d="M6 10q10-3 19 2M7 15q9-2 16 2M8 20q7-2 13 2" fill="none" stroke="#111" stroke-width="2.600" stroke-linecap="round"/></svg></b>
      <b class="cur"><svg viewBox="0 0 30 28"><use href="#logo"/></svg></b>
    </div>
    <div class="tray">
      <svg class="t1" width="15" height="10" viewBox="0 0 15 10"><path d="m1 9 6.500-7L14 9" fill="none" stroke="#fff" stroke-width="2"/></svg>
      <svg class="t2" width="20" height="15" viewBox="0 0 20 15"><rect x=".8" y=".8" width="18.400" height="13.400" rx="1.500" fill="none" stroke="#fff" stroke-width="1.400"/><path d="M4 4.500h12M4 7.500h12" stroke="#fff" stroke-width="1.600" stroke-dasharray="1.600 1.500"/><path d="M5 11h10" stroke="#fff" stroke-width="1.500"/></svg>
      <div class="lang">ENG<br>ES</div>
      <svg class="t3" width="20" height="16" viewBox="0 0 20 16"><path d="M1 6q9-10 18 0M3.500 9q6.500-7 13 0M6.500 12q3.500-4 7 0" fill="none" stroke="#fff" stroke-width="1.500"/><circle cx="10" cy="14" r="1.600" fill="#fff"/></svg>
      <svg class="t4" width="21" height="17" viewBox="0 0 21 17"><path d="M1 6h3l5-4v13l-5-4H1ZM12 6q2 2.500 0 5M14.500 3.500q4 5 0 10M17 1.500q6 7 0 14" fill="none" stroke="#fff" stroke-width="1.400"/></svg>
      <svg class="t5" width="20" height="13" viewBox="0 0 20 13"><rect x=".8" y=".8" width="15.400" height="11.400" rx="2.500" fill="none" stroke="#fff" stroke-width="1.500"/><rect x="3" y="3" width="4" height="7" fill="#fff"/><path d="M17 4q3 0 3 2.500T17 9Z" fill="#fff"/></svg>
      <div class="clock">9:54:46 PM<br>10/29/2024</div>
      <svg class="t6" width="17" height="19" viewBox="0 0 17 19"><path d="M1 14.500h15l-2-3.500V7Q13 1.500 8.500 1.500T3 7v4ZM6 15q0 3 2.500 3t2.500-3" fill="none" stroke="#fff" stroke-width="1.500"/></svg>
    </div>
  </footer>
</div>
<script src="scene.js"></script>
</body>
</html>
```
FILE: styles.css
```css
* { box-sizing: border-box; }
body { margin: 0; background: #202121; overflow: hidden; font-family: "Noto Sans CJK SC", "Noto Sans", sans-serif; color: #fff; }
p, h2, hr { margin: 0; padding: 0; }
svg { display: block; flex: none; }
b, em { font-weight: 400; font-style: normal; }
.defs { position: absolute; }
.app { width: 1919px; height: 1078px; display: flex; flex-direction: column; }

.topbar { height: 48px; background: #000; display: grid; grid-template-columns: 658px 1fr 584px; }
.top-left { display: flex; align-items: center; }
.app-logo { margin-left: 23px; }
.app-chev { margin: 0 11px 0 6px; }
.vline { width: 2px; height: 30px; background: #3a3a3a; flex: none; }
.top-left .vline + svg { margin-left: 8px; }
.vline.thin { margin-left: 33px; }
.file { font-size: 17px; line-height: 24px; width: 30px; margin-left: 4px; color: #eee; white-space: nowrap; }
.top-left svg.q1 { margin-left: 22px; }
.q2 { margin-left: 31px; }
.q3 { margin-left: 34px; }
.q4 { margin-left: 35px; }
.q5 { margin-left: 35px; }
.modes { display: flex; align-items: stretch; padding-top: 6px; }
.mode { height: 42px; line-height: 43px; font-size: 22.600px; font-weight: 700; text-align: center; color: #d4d4de; width: 180px; }
.mode.on { width: 150px; background: #17cc5f; color: #fff; border-radius: 6px; }
.mode:nth-child(3) { width: 150px; }
.top-right { display: flex; align-items: center; }
.r2 { margin-left: 51px; }
.r3 { margin-left: 49px; }
.r4 { margin-left: 52px; }
.r5 { margin-left: 56px; }
.r6 { margin-left: 42px; }
.r7 { margin-left: 38.500px; }
.r8 { margin-left: 54.500px; }
.r9 { margin-left: 51px; }

.main { height: 971px; display: flex; background: #353537; border-bottom: 2px solid #f6f6f6; }
.work { width: 1258px; display: flex; flex-direction: column; }
.toolbar { height: 77px; width: 1256px; border-top: 2px solid #373737; background: #1c1c1c; display: flex; align-items: center; gap: 15.400px; padding: 1px 0 0 16.500px; }
.toolbar i { width: 2px; height: 30px; background: #3f3f3f; flex: none; }
.tool { width: 42.500px; height: 42px; border: 1.500px solid #4a4a4a; border-radius: 8px; flex: none; display: flex; align-items: center; justify-content: center; }
.tool svg { width: 25px; height: 25px; overflow: visible; fill: none; stroke: #c4c4c4; stroke-width: 1.700; }
.tool .g { stroke: #14a94e; }
.tool .f { fill: #c4c4c4; }
.tool .gf { fill: #17c95c; stroke: none; }
.tool.off { border-color: #2b2b2b; }
.tool.off svg { stroke: #4a4a4a; }

.viewport { position: relative; height: 892px; border-left: 1px solid #fff; }
.scene { margin-left: -1px; }
.plate-text { font-family: "Noto Sans", sans-serif; font-weight: 700; }
.brand { font-family: "DejaVu Sans", sans-serif; font-weight: 400; stroke: #49484c; stroke-width: .7px; }
.num { font-family: "DejaVu Serif", serif; font-style: italic; }
.slider { position: absolute; left: 1113px; top: 223px; width: 27px; height: 450px; display: flex; flex-direction: column; justify-content: space-between; background: linear-gradient(#17cc5f, #17cc5f) center / 4px 100% no-repeat; }
.slider span { width: 27px; height: 27px; border-radius: 50%; background: #17cc5f; border: 2px solid #0fff68; }
.info { position: absolute; left: 10px; top: 763px; width: 386px; height: 121px; border-radius: 8px; background: #252525; padding: 21px 0 0 29px; font-size: 16.900px; }
.info p { display: flex; align-items: center; gap: 7.500px; height: 38px; white-space: nowrap; }
.info em { color: #e31616; font-size: 13px; margin: -8px 0 0 -4px; }
.actions { position: absolute; left: 880px; top: 709px; display: flex; flex-direction: column; gap: 6px; }
.act { width: 323px; height: 84px; border-radius: 16px; background: rgba(38, 38, 38, .4); display: flex; gap: 15px; padding: 15px 14px; }
.act button { width: 225px; height: 54px; border: 0; border-radius: 5px; background: #58575c; color: #fff; font: 17px "Noto Sans CJK SC", sans-serif; letter-spacing: .3px; padding: 0 0 2px; }
.act .go { background: #17cc5f; }
.act .more { width: 54px; display: flex; align-items: center; justify-content: center; padding: 0; }
.sidetabs { position: absolute; left: 1216px; top: 354px; width: 41px; height: 231px; background: #4b4b4d; border-radius: 8px 0 0 8px; padding: 7px 0 0 1px; }
.sidetabs b { height: 43.300px; display: flex; align-items: center; justify-content: center; border-radius: 8px 0 0 8px; }
.sidetabs .on { background: #17cc5f; height: 42px; margin-bottom: 1px; }
.sidetabs svg { fill: none; stroke: #ceced6; stroke-width: 2; }
.sidetabs .on svg { stroke: none; }

.panel { width: 661px; background: #4b4b4d; padding-left: 15px; }
.head { display: flex; align-items: center; }
h2 { font-size: 23px; font-weight: 400; line-height: 30px; margin-left: 5.500px; letter-spacing: .55px; }
.acts { margin-left: auto; display: flex; align-items: center; }
.acts svg { fill: none; stroke: #e4e4e4; stroke-width: 1.700; }
.dbl { color: #ddd; }
.filament { height: 67px; border-bottom: 2px solid #3c3c3e; margin-left: -15px; padding: 2px 21px 0 15px; }
.filament .acts { gap: 20px; }
.up { transform: rotate(180deg); }
.objects { height: 241px; border-bottom: 2px solid #3c3c3e; margin-left: -15px; padding: 26px 16px 0 15px; }
.objects .head { height: 30px; padding-right: 5px; }
.tree { margin-top: 16px; width: 630px; height: 144px; border: 1.500px solid #646466; border-radius: 6px; display: flex; font-size: 14.600px; color: #ddd; overflow: hidden; }
.rows { flex: 1; }
.tbar { width: 9px; background: #757579; border-radius: 5px; }
.cols { height: 35px; display: grid; grid-template-columns: 241px 45px 105px 160px 1fr; border-bottom: 1px solid #68686a; line-height: 33px; text-align: center; }
.cols span { border-right: 2px solid #646466; }
.row { height: 36px; display: flex; align-items: center; padding-left: 16.500px; line-height: 36px; }
.sel { background: #17cc5f; padding-left: 2px; gap: 3.500px; color: #e4f3e8; }
.child { padding-left: 32.500px; }
.child span { width: 222px; }
.child b { margin-left: 42px; width: 45px; height: 27px; line-height: 26px; border-radius: 7px; background: #3fdf57; color: #111; text-align: center; font-size: 16px; }
.process { padding-right: 16px; }
.process .head { height: 80px; }
.process .head i { width: 1px; height: 21px; background: #737375; margin: 0 14px 0 13px; }
.toggle { display: flex; background: #2e2e2e; border-radius: 7px; padding: 1.500px; width: 162px; height: 30px; font-size: 16.500px; line-height: 26px; text-align: center; }
.toggle span { flex: 1; }
.toggle .on { background: #17cc5f; border-radius: 6px 0 0 6px; flex: 0 0 81px; }
.process .head .acts { gap: 21px; padding-right: 8px; }
.process .acts .dim { stroke: #77777a; }
.process .acts svg { stroke-width: 1.500; }
.preset { display: flex; align-items: center; gap: 11px; margin-top: -7px; }
.select { width: 588px; height: 36px; border: 1.500px solid #77777a; border-radius: 6px; display: flex; align-items: center; justify-content: space-between; padding: 0 14px 2px 6.500px; font-size: 17px; line-height: 30px; }
.settings { position: relative; margin: 21px 0 0 -15px; width: 645px; height: 269px; border: 1.500px solid #238a4a; border-radius: 0 6px 6px 0; padding: 22px 17px 0 21px; font-size: 16.700px; color: #bdbdbf; }
.group { height: 39px; display: flex; align-items: center; padding: 0 7px 0 0; }
.group span { margin-left: 15.500px; line-height: 36px; }
.group hr { flex: 1; height: 2px; border: 0; background: #6c6c6e; margin: 0 15px 0 14px; }
.gc { color: #99999b; }
.seam { margin-top: 28px; height: 37px; }
.seam hr { height: 1px; margin-left: 16px; }
.field { display: flex; justify-content: space-between; align-items: center; height: 43.500px; padding: 0 0 0 23.500px; margin-right: -.5px; }
.field.first { margin-top: 1.500px; }
.field.last { margin-top: 2.500px; }
.box { width: 195px; height: 36px; border: 1.500px solid #77777a; border-radius: 6px; display: flex; align-items: center; justify-content: space-between; padding: 0 6px 0 5px; color: #fff; line-height: 32px; }
.box em { color: #9a9a9c; }
.box svg { margin-right: 9px; }
.sbar { position: absolute; right: 0; top: 2px; width: 6px; height: 126px; border-radius: 3px; background: #9b9b9d; }
.stack { position: relative; width: 629px; height: 225px; margin: 23px 0 0 1px; background: #353537; border-radius: 8px; overflow: hidden; }
.stack .dbl { position: absolute; right: 17px; top: 15px; }

.taskbar { height: 59px; background: #202121; display: flex; justify-content: space-between; border-top: 1px solid #3a3a3c; font-family: "Open Sans", "Noto Sans", sans-serif; }
.apps { display: flex; padding-left: 259.800px; }
.apps b { position: relative; width: 55.100px; height: 58px; display: flex; align-items: center; justify-content: center; }
.apps svg { width: 30px; height: 30px; }
.apps svg[viewBox="0 0 36 36"] { width: 36px; height: 36px; margin: -6px 0 0 4px; }
.apps .run::after, .apps .cur::after { content: ""; position: absolute; left: 24px; bottom: 5px; width: 8px; height: 4px; border-radius: 2px; background: #9a9a9c; }
.apps .cur::before { content: ""; position: absolute; inset: 3px 2px 5px 3px; border-radius: 5px; background: #2d2e2e; border: 1px solid #363737; }
.apps .cur svg { position: relative; }
.apps .cur::after { left: 18px; width: 20px; background: #45b5f5; }
.wa em { position: absolute; left: 27px; top: 7px; width: 22px; height: 21px; border-radius: 50%; background: #3fb4f8; color: #111; font-size: 13px; line-height: 21px; text-align: center; }
.tray { display: flex; align-items: center; padding-right: 25px; font-size: 14.400px; line-height: 20px; text-align: center; white-space: nowrap; }
.t2 { margin-left: 22px; }
.lang { width: 32px; margin-left: 22px; }
.t3 { margin-left: 21px; }
.t4 { margin-left: 10px; }
.t5 { margin-left: 10px; }
.clock { width: 80px; margin-left: 17px; text-align: right; letter-spacing: -.15px; }
.lang, .clock { padding-bottom: 1px; }
.t6 { margin-left: 11px; }
```
FILE: scene.js
```js
// Draws the 30 x 30 build-plate grid in perspective between the four plate corners.
(function () {
  var p = [[516.7, 242.7], [1120, 436.7], [846, 945], [148, 659]];
  var dx1 = p[1][0] - p[2][0], dx2 = p[3][0] - p[2][0], dx3 = p[0][0] - p[1][0] + p[2][0] - p[3][0];
  var dy1 = p[1][1] - p[2][1], dy2 = p[3][1] - p[2][1], dy3 = p[0][1] - p[1][1] + p[2][1] - p[3][1];
  var det = dx1 * dy2 - dx2 * dy1;
  var g = (dx3 * dy2 - dx2 * dy3) / det, h = (dx1 * dy3 - dx3 * dy1) / det;
  var a = p[1][0] - p[0][0] + g * p[1][0], b = p[3][0] - p[0][0] + h * p[3][0];
  var d = p[1][1] - p[0][1] + g * p[1][1], e = p[3][1] - p[0][1] + h * p[3][1];
  function at(u, v) {
    var w = g * u + h * v + 1;
    return ((a * u + b * v + p[0][0]) / w).toFixed(1) + " " + ((d * u + e * v + p[0][1]) / w).toFixed(1);
  }
  var n = 30, path = "";
  for (var i = 1; i < n; i++) {
    path += "M" + at(i / n, 0) + "L" + at(i / n, 1) + "M" + at(0, i / n) + "L" + at(1, i / n);
  }
  var el = document.createElementNS("http://www.w3.org/2000/svg", "path");
  el.setAttribute("d", path);
  document.getElementById("grid").appendChild(el);
})();
```
